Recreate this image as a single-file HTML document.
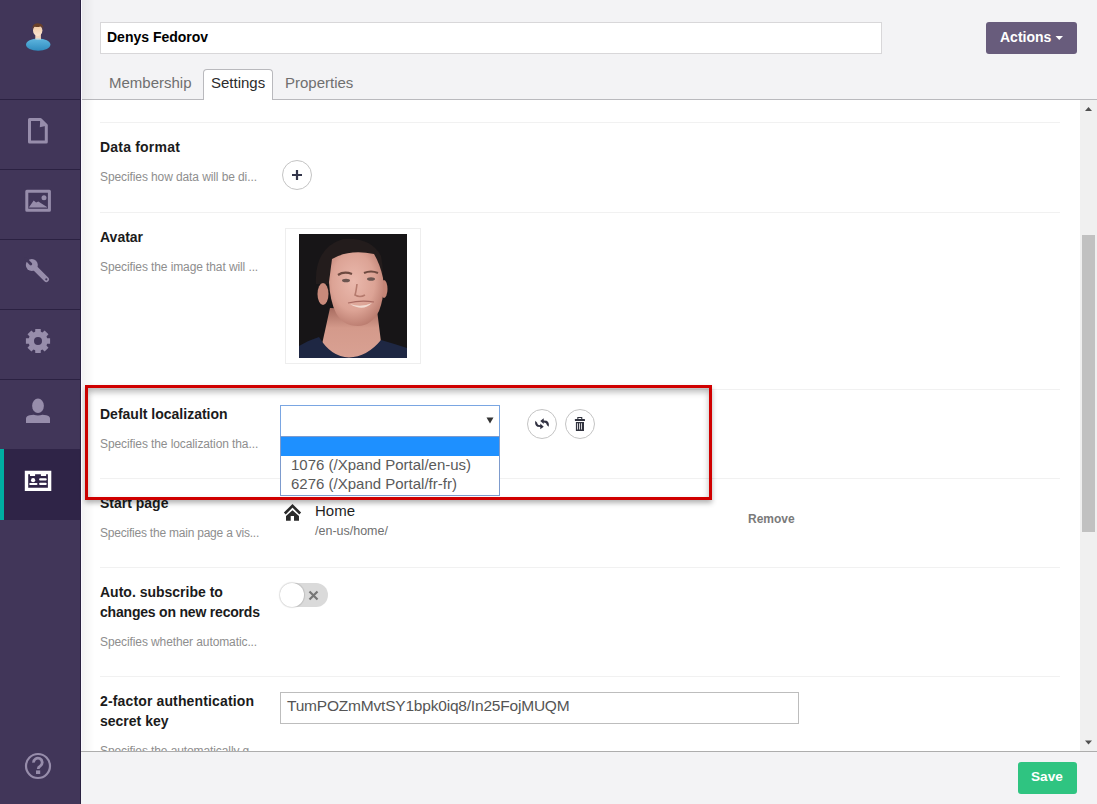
<!DOCTYPE html>
<html><head><meta charset="utf-8">
<style>
*{margin:0;padding:0;box-sizing:border-box}
html,body{width:1097px;height:804px;overflow:hidden;background:#fff;font-family:"Liberation Sans",sans-serif}
.a{position:absolute}
.t{position:absolute;white-space:nowrap;line-height:1}
svg{position:absolute;overflow:visible}
.sep{position:absolute;left:0;width:80px;height:1px;background:#2b2142}
.lbl{font-weight:bold;font-size:14px;color:#1b1b1b}
.desc{font-size:12px;letter-spacing:-0.1px;color:#8e8e8e}
.hr{position:absolute;left:100px;width:960px;height:1px;background:#f1f1f1}
.circ{position:absolute;width:30px;height:30px;border:1px solid #c4c4c4;border-radius:50%;background:#fff}
</style></head><body>

<!-- SIDEBAR -->
<div class="a" style="left:0;top:0;width:81px;height:804px;background:#413659;border-right:1px solid #2a2140"></div>
<div class="sep" style="top:99px"></div>
<div class="sep" style="top:169px"></div>
<div class="sep" style="top:239px"></div>
<div class="sep" style="top:309px"></div>
<div class="sep" style="top:379px"></div>
<div class="a" style="left:0;top:449px;width:80px;height:71px;background:#2f2447"></div>
<div class="a" style="left:0;top:449px;width:4px;height:71px;background:#00aea2"></div>

<svg width="1097" height="804" style="left:0;top:0">
 <defs>
  <linearGradient id="gb" x1="0" y1="0" x2="0" y2="1"><stop offset="0" stop-color="#5fb6df"/><stop offset="1" stop-color="#2f8cbf"/></linearGradient>
  <linearGradient id="gf" x1="0" y1="0" x2="0" y2="1"><stop offset="0" stop-color="#f2c9a0"/><stop offset="1" stop-color="#fbe6d2"/></linearGradient>
 </defs>
 <!-- top avatar -->
 <ellipse cx="38.2" cy="44.6" rx="12.2" ry="6.2" fill="url(#gb)"/>
 <rect x="35.3" y="34" width="5.6" height="5.5" fill="#f4d6bd"/>
 <path d="M37.8 39.5 l-3.2 -1 h6.6z" fill="#a8dcf2"/>
 <ellipse cx="37.7" cy="30.6" rx="4.7" ry="5.3" fill="url(#gf)"/>
 <path d="M32.4 29.5 Q32 23.6 37.6 23.2 Q43.6 23.4 43.4 29.3 Q42.8 26.6 40.8 26.2 Q37 27.8 34.6 26.4 Q33 27.2 32.4 29.5z" fill="#6a4028"/>
 <g fill="none" stroke="#978dab" stroke-width="3" stroke-linejoin="round">
  <!-- doc -->
  <path d="M29.5 119.5 H40.5 L46.3 125.3 V142.1 H29.5 Z"/>
  <!-- image -->
  <rect x="26.8" y="191.3" width="22.6" height="19"/>
  <!-- help circle -->
  <circle cx="38" cy="766" r="12" stroke-width="2.2"/>
 </g>
 <g fill="#978dab">
  <path d="M40.3 119.6 L46.5 125.8 L39.8 127.2 Z"/>
  <path d="M28.8 207.6 L33.7 200.6 L36.1 202.6 L38.3 201.6 L47 207 V207.6 Z"/>
  <circle cx="44" cy="197.7" r="2.5"/>
  <!-- wrench -->
  <circle cx="31.8" cy="264.9" r="6"/>
  <path d="M32.5 265.6 L46.3 279.3" stroke="#978dab" stroke-width="5.4" stroke-linecap="round"/>
  <path d="M30.8 263.9 L25.5 258.6" stroke="#413659" stroke-width="2.8" stroke-linecap="round"/>
  <circle cx="46.3" cy="279.3" r="1.1" fill="#413659"/>
  <!-- gear -->
  <path fill-rule="evenodd" d="M35.16 331.83 L35.29 328.90 L40.71 328.90 L40.84 331.83 L42.48 332.51 L44.64 330.53 L48.47 334.36 L46.49 336.52 L47.17 338.16 L50.10 338.29 L50.10 343.71 L47.17 343.84 L46.49 345.48 L48.47 347.64 L44.64 351.47 L42.48 349.49 L40.84 350.17 L40.71 353.10 L35.29 353.10 L35.16 350.17 L33.52 349.49 L31.36 351.47 L27.53 347.64 L29.51 345.48 L28.83 343.84 L25.90 343.71 L25.90 338.29 L28.83 338.16 L29.51 336.52 L27.53 334.36 L31.36 330.53 L33.52 332.51Z M42 341 A4 4 0 1 0 34 341 A4 4 0 1 0 42 341Z"/>
  <!-- user -->
  <ellipse cx="38" cy="405.8" rx="5.9" ry="7.2"/>
  <path d="M26 423 V418.6 Q26 416.2 29.6 415.3 L33.6 414.8 Q38 416.2 42.4 414.8 L46.4 415.3 Q50 416.2 50 418.6 V423 Z"/>
  <!-- help ? -->
  <path d="M33.6 762.6 A4.3 4.3 0 1 1 40.4 765.9 Q38.2 767 38.2 769" fill="none" stroke="#978dab" stroke-width="2.8"/>
  <rect x="36" y="770.4" width="4.2" height="3.6"/>
 </g>
 <!-- card icon -->
 <g fill="#fff">
  <path fill-rule="evenodd" d="M24.8 470.8 H51.3 V491.1 H24.8 Z M28.2 474.2 V487.7 H47.9 V474.2 H46.1 V476 H40.9 V474.2 H35.1 V476 H30 V474.2 Z"/>
  <circle cx="33.1" cy="480.2" r="2.1"/>
  <rect x="29.2" y="483.1" width="8.3" height="2" rx="1"/>
  <rect x="39.1" y="478.3" width="7.6" height="2.3" rx="1"/>
  <rect x="39.1" y="482.8" width="7.6" height="2.3" rx="1"/>
 </g>
</svg>

<!-- HEADER -->
<div class="a" style="left:81px;top:0;width:1016px;height:100px;background:#f3f3f5;border-bottom:1px solid #b9b9bd"></div>
<div class="a" style="left:100px;top:22px;width:782px;height:32px;background:#fff;border:1px solid #d8d7d9"></div>
<div class="t lbl" style="left:107px;top:30px;font-size:14px;color:#000">Denys Fedorov</div>
<div class="a" style="left:203px;top:69px;width:70px;height:31px;background:#fff;border:1px solid #b9b9bd;border-bottom:none;border-radius:4px 4px 0 0"></div>
<div class="t" style="left:109px;top:75px;font-size:15px;color:#6f6f6f">Membership</div>
<div class="t" style="left:211px;top:75px;font-size:15px;color:#2c2c2c">Settings</div>
<div class="t" style="left:285px;top:75px;font-size:15px;color:#6f6f6f">Properties</div>
<div class="a" style="left:986px;top:22px;width:91px;height:32px;background:#685c7c;border-radius:3px"></div>
<div class="t" style="left:1000px;top:30px;font-size:14px;font-weight:bold;color:#fff">Actions</div>
<svg width="10" height="6" style="left:1055px;top:35px"><path d="M0.5 1 H8 L4.25 5 Z" fill="#fff"/></svg>

<!-- CONTENT -->
<div class="hr" style="top:122px"></div>
<div class="t lbl" style="left:100px;top:140px;letter-spacing:0.2px">Data format</div>
<div class="t desc" style="left:100px;top:171px">Specifies how data will be di...</div>
<div class="circ" style="left:282px;top:160px"></div>
<svg width="12" height="12" style="left:291px;top:169px"><path d="M1 6 H11 M6 1 V11" stroke="#33354a" stroke-width="2.2"/></svg>

<div class="hr" style="top:212px"></div>
<div class="t lbl" style="left:100px;top:230px">Avatar</div>
<div class="t desc" style="left:100px;top:261px">Specifies the image that will ...</div>
<div class="a" style="left:285px;top:228px;width:136px;height:136px;border:1px solid #eee;background:#fff"></div>
<svg width="108" height="124" style="left:299px;top:234px">
 <defs>
  <radialGradient id="sk" cx="0.45" cy="0.4" r="0.65"><stop offset="0" stop-color="#eab9ad"/><stop offset="0.6" stop-color="#dca395"/><stop offset="1" stop-color="#b7786b"/></radialGradient>
  <linearGradient id="nk" x1="0" y1="0" x2="0" y2="1"><stop offset="0" stop-color="#a86c60"/><stop offset="0.4" stop-color="#d49a8b"/><stop offset="1" stop-color="#d9a193"/></linearGradient>
 </defs>
 <rect width="108" height="124" fill="#171517"/>
 <path d="M17 50 Q15 14 44 5 Q72 3 82 22 Q85 36 83 50 Z" fill="#231c1c"/>
 <path d="M31 74 L78 76 L84 124 L20 124 Z" fill="url(#nk)"/>
 <ellipse cx="24" cy="60" rx="5.5" ry="11" fill="#c98a7b"/>
 <ellipse cx="85" cy="55" rx="3.5" ry="9" fill="#c48576"/>
 <path d="M33 25 Q50 15 75 20 Q81 30 84 44 Q86 62 80 77 Q72 92 59 92 Q44 92 37 79 Q31 67 30 48 Z" fill="url(#sk)"/>
 <path d="M0 124 V112 Q10 106 20 103 Q32 123 50 123.5 Q68 123 82 106 Q96 110 108 114 V124 Z" fill="#1e2743"/>
 <path d="M39 41 Q45 37 53 40" stroke="#6e4a40" stroke-width="2.2" fill="none"/>
 <path d="M65 39 Q72 36 79 39" stroke="#6e4a40" stroke-width="2.2" fill="none"/>
 <ellipse cx="47" cy="46.5" rx="4" ry="1.8" fill="#6b5550"/>
 <ellipse cx="72" cy="45" rx="4" ry="1.8" fill="#6b5550"/>
 <path d="M58 50 Q57 58 56 61 Q61 64 66 61" stroke="#b57a6d" stroke-width="1.6" fill="none"/>
 <path d="M51 70 Q62 74 73 69 Q64 78 51 70Z" fill="#f2dcd3"/>
 <path d="M49 69 Q62 66 75 68" stroke="#a86a62" stroke-width="1.2" fill="none"/>
</svg>

<div class="hr" style="top:389px"></div>
<div class="t lbl" style="left:100px;top:407px">Default localization</div>
<div class="t desc" style="left:100px;top:438px">Specifies the localization tha...</div>

<div class="hr" style="top:478px"></div>
<div class="t lbl" style="left:100px;top:496px">Start page</div>
<div class="t desc" style="left:100px;top:527px;letter-spacing:-0.22px">Specifies the main page a vis...</div>
<svg width="20" height="20" style="left:282px;top:503px">
 <path d="M2.8 10.5 L10.5 2.8 L18.2 10.5" fill="none" stroke="#2a2a2a" stroke-width="2.6"/>
 <path d="M10.5 7.3 L17 12.9 V17.8 H12 V12.9 H8.7 V17.8 H4 V12.9 Z" fill="#2a2a2a"/>
</svg>
<div class="t" style="left:315px;top:503px;font-size:15px;color:#1f1f1f">Home</div>
<div class="t" style="left:315px;top:525px;font-size:12.5px;color:#707070">/en-us/home/</div>
<div class="t" style="left:748px;top:513px;font-size:12px;font-weight:bold;color:#7a7a7a">Remove</div>

<div class="hr" style="top:567px"></div>
<div class="t lbl" style="left:100px;top:582px;line-height:20px">Auto. subscribe to<br><span style="letter-spacing:-0.2px">changes on new records</span></div>
<div class="t desc" style="left:100px;top:636px">Specifies whether automatic...</div>
<div class="a" style="left:280px;top:583px;width:48px;height:24px;border-radius:12px;background:#dadada"></div>
<div class="a" style="left:280px;top:583px;width:24px;height:24px;border-radius:12px;background:#fff;box-shadow:0 0 1px 1px rgba(0,0,0,.12)"></div>
<svg width="12" height="12" style="left:308px;top:590px"><path d="M1.5 1.5 L9.5 9.5 M9.5 1.5 L1.5 9.5" stroke="#777" stroke-width="2.2"/></svg>

<div class="hr" style="top:676px"></div>
<div class="t lbl" style="left:100px;top:691px;line-height:20px"><span style="letter-spacing:0.14px">2-factor authentication</span><br>secret key</div>
<div class="t desc" style="left:100px;top:745px">Specifies the automatically g...</div>
<div class="a" style="left:280px;top:692px;width:519px;height:32px;border:1px solid #bdbdbd;background:#fff"></div>
<div class="t" style="left:287px;top:698px;font-size:15.5px;letter-spacing:-0.2px;color:#555">TumPOZmMvtSY1bpk0iq8/In25FojMUQM</div>

<!-- RED BOX -->
<div class="a" style="left:85px;top:385px;width:627px;height:115px;border:3px solid #d00000;box-shadow:0 3px 5px rgba(0,0,0,.3), inset 0 4px 6px rgba(0,0,0,.28)"></div>

<!-- DROPDOWN -->
<div class="a" style="left:280px;top:405px;width:220px;height:32px;background:#fff;border:1px solid #7aa6e2"></div>
<svg width="10" height="8" style="left:486px;top:417px"><path d="M0.5 0.5 H7.5 L4 6.5 Z" fill="#333"/></svg>
<div class="a" style="left:280px;top:436px;width:220px;height:60px;background:#fff;border:1px solid #7d9bcd"></div>
<div class="a" style="left:281px;top:437px;width:218px;height:19px;background:#1e90ff"></div>
<div class="t" style="left:291px;top:457px;font-size:15px;color:#5a5a5a">1076 (/Xpand Portal/en-us)</div>
<div class="t" style="left:291px;top:476px;font-size:15px;color:#5a5a5a">6276 (/Xpand Portal/fr-fr)</div>

<div class="circ" style="left:527px;top:409px"></div>
<div class="circ" style="left:565px;top:409px"></div>
<svg width="20" height="20" style="left:532px;top:414px">
 <g fill="#303040" transform="translate(10 9.8) scale(1.15) translate(-10 -9.8)">
  <path d="M4.2 7.2 Q3.4 11 6 12.4 L8.5 12.6 L8.5 14.6 L11.5 12.3 L8.5 9.6 L8.5 11 Q6 11 5.8 8.8Z"/>
  <path d="M15.8 12.4 Q16.6 8.6 14 7.2 L11.5 7 L11.5 5 L8.5 7.3 L11.5 10 L11.5 8.6 Q14 8.6 14.2 10.8Z"/>
 </g>
</svg>
<svg width="20" height="20" style="left:570px;top:412px">
 <g fill="#31333f">
  <path d="M7.3 5.1 H12.3 V7 H11.2 V6 H8.4 V7 H7.3Z"/>
  <rect x="4.9" y="7" width="10.1" height="1.9" rx="0.5"/>
  <path fill-rule="evenodd" d="M5.9 10 H14 V19 H5.9Z M7.1 11.3 V17.6 H7.9 V11.3Z M9.1 11.3 V17.6 H9.9 V11.3Z M11 11.3 V17.6 H11.8 V11.3Z"/>
 </g>
</svg>

<div class="a" style="left:81px;top:0;width:14px;height:804px;background:linear-gradient(to right,rgba(250,248,255,1) 0,rgba(250,248,255,1) 1px,rgba(0,0,0,.05) 1px,rgba(0,0,0,.035) 4px,rgba(0,0,0,0) 14px)"></div>
<!-- SCROLLBAR -->
<div class="a" style="left:1080px;top:100px;width:17px;height:651px;background:#f0f0f0"></div>
<div class="a" style="left:1082px;top:235px;width:13px;height:297px;background:#c1c1c1"></div>
<svg width="10" height="6" style="left:1084px;top:106px"><path d="M1 5 H8 L4.5 1Z" fill="#505050"/></svg>
<svg width="10" height="6" style="left:1084px;top:740px"><path d="M1 0.6 H8 L4.5 4.6Z" fill="#505050"/></svg>

<!-- FOOTER -->
<div class="a" style="left:81px;top:751px;width:1016px;height:53px;background:#f3f3f5;border-top:1px solid #adadad"></div>
<div class="a" style="left:1018px;top:762px;width:59px;height:32px;background:#2fc481;border-radius:3px"></div>
<div class="t" style="left:1031px;top:770px;font-size:13.6px;font-weight:bold;color:#fff">Save</div>

</body></html>
